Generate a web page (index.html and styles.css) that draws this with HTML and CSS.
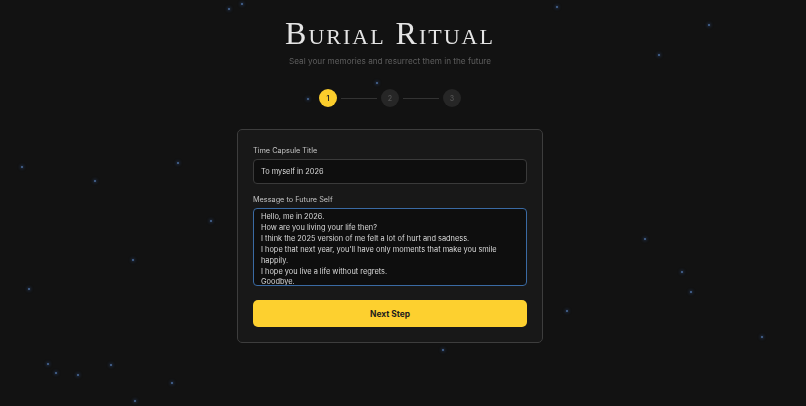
FILE: index.html
```html
<!DOCTYPE html>
<html lang="en">
<head>
  <meta charset="UTF-8" />
  <meta name="viewport" content="width=device-width, initial-scale=1.0" />
  <title>Burial Ritual</title>
  <link rel="stylesheet" href="styles.css">
</head>
<body>
  <div class="sky">
    <span class="star" style="left:241px;top:3px"></span>
    <span class="star" style="left:228px;top:8px"></span>
    <span class="star" style="left:556px;top:6px"></span>
    <span class="star" style="left:658px;top:54px"></span>
    <span class="star" style="left:708px;top:24px"></span>
    <span class="star" style="left:21px;top:166px"></span>
    <span class="star" style="left:94px;top:180px"></span>
    <span class="star" style="left:177px;top:162px"></span>
    <span class="star" style="left:210px;top:220px"></span>
    <span class="star" style="left:132px;top:259px"></span>
    <span class="star" style="left:28px;top:288px"></span>
    <span class="star" style="left:47px;top:363px"></span>
    <span class="star" style="left:55px;top:372px"></span>
    <span class="star" style="left:77px;top:374px"></span>
    <span class="star" style="left:110px;top:364px"></span>
    <span class="star" style="left:171px;top:382px"></span>
    <span class="star" style="left:134px;top:400px"></span>
    <span class="star" style="left:442px;top:349px"></span>
    <span class="star" style="left:644px;top:238px"></span>
    <span class="star" style="left:681px;top:271px"></span>
    <span class="star" style="left:690px;top:291px"></span>
    <span class="star" style="left:566px;top:310px"></span>
    <span class="star" style="left:761px;top:336px"></span>
    <span class="star" style="left:307px;top:98px"></span>
    <span class="star" style="left:376px;top:82px"></span>
  </div>

  <main class="page">
    <header class="hero">
      <h1>Burial Ritual</h1>
      <p>Seal your memories and resurrect them in the future</p>
    </header>

    <div class="steps">
      <span class="step active">1</span>
      <span class="step-line"></span>
      <span class="step">2</span>
      <span class="step-line"></span>
      <span class="step">3</span>
    </div>

    <form class="card">
      <label class="field-label" for="title">Time Capsule Title</label>
      <input id="title" class="field" type="text" value="To myself in 2026">

      <label class="field-label" for="message">Message to Future Self</label>
      <textarea id="message" class="field message">Hello, me in 2026.
How are you living your life then?
I think the 2025 version of me felt a lot of hurt and sadness.
I hope that next year, you'll have only moments that make you smile happily.
I hope you live a life without regrets.
Goodbye.</textarea>

      <button type="button">Next Step</button>
    </form>
  </main>
</body>
</html>
```

FILE: styles.css
```css
html, body {
  margin: 0;
  padding: 0;
  height: 100%;
  background-color: #121212;
  color: #ddd;
  font-family: Inter, "Liberation Sans", sans-serif;
  overflow: hidden;
}
.sky {
  position: fixed;
  inset: 0;
  pointer-events: none;
}
.star {
  position: absolute;
  width: 2px;
  height: 2px;
  border-radius: 50%;
  background-color: #4d6e9c;
  box-shadow: 0 0 3px 1px rgba(60, 100, 170, 0.35);
}
.page {
  position: relative;
  display: flex;
  flex-direction: column;
  align-items: center;
  padding-right: 26px;
}
.hero {
  text-align: center;
}
.hero h1 {
  margin: 14px 0 0 0;
  font-family: "Liberation Serif", serif;
  font-weight: normal;
  font-variant: small-caps;
  font-size: 32px;
  line-height: 38px;
  letter-spacing: 2px;
  color: #e4e4e4;
}
.hero p {
  margin: 4px 0 0 0;
  font-size: 8.2px;
  color: #5e5e5e;
}
.steps {
  display: flex;
  align-items: center;
  gap: 4px;
  margin-top: 23px;
}
.step {
  width: 18px;
  height: 18px;
  border-radius: 50%;
  background-color: #262626;
  color: #4f4f4f;
  font-size: 7px;
  font-weight: 600;
  display: flex;
  align-items: center;
  justify-content: center;
}
.step.active {
  background-color: #fbcd2c;
  color: #222;
}
.step-line {
  width: 36px;
  height: 1px;
  background-color: #333;
}
.card {
  margin-top: 22px;
  width: 274px;
  padding: 16px 15px 15px 15px;
  background-color: #181818;
  border: 1px solid #3d3d3d;
  border-radius: 5px;
  display: flex;
  flex-direction: column;
}
.field-label {
  font-size: 7.3px;
  color: #c2c2c2;
  margin-bottom: 4px;
}
.field {
  box-sizing: border-box;
  width: 100%;
  background-color: #0e0e0e;
  border: 1px solid #3a3a3a;
  border-radius: 4px;
  color: #dadada;
  font-family: Inter, "Liberation Sans", sans-serif;
  font-size: 7.4px;
  padding: 0 7px;
  height: 25px;
  margin-bottom: 11px;
  outline: none;
}
.message {
  height: 78px;
  padding: 3px 7px;
  line-height: 10.9px;
  resize: none;
  overflow: hidden;
  border-color: #3a6aa3;
  margin-bottom: 14px;
}
button {
  height: 27px;
  border: none;
  border-radius: 5px;
  background-color: #fdd02f;
  color: #1c1c1c;
  font-family: Inter, "Liberation Sans", sans-serif;
  font-size: 8.4px;
  font-weight: 700;
  cursor: pointer;
}
```
